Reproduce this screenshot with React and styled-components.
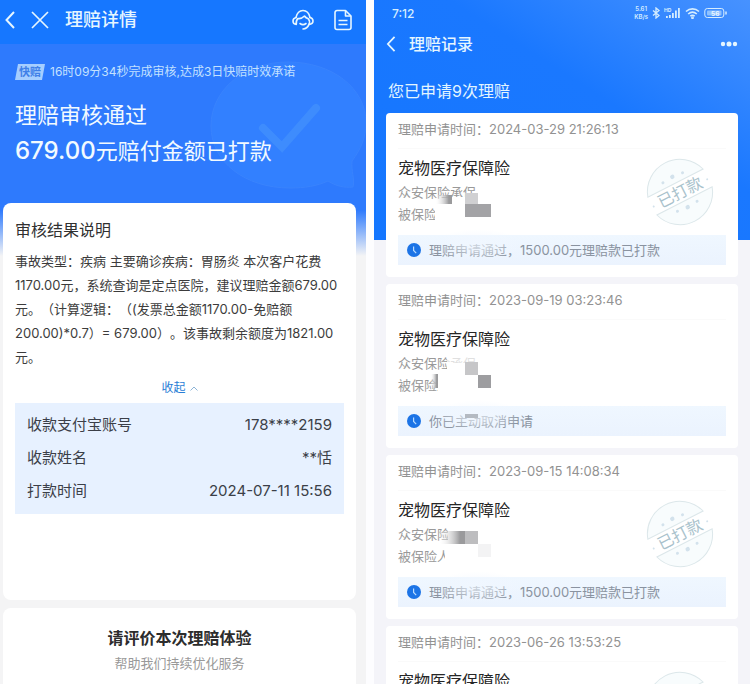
import React, { useState } from "react";
import styled, { createGlobalStyle } from "styled-components";

const GlobalStyle = createGlobalStyle`
    * {
        box-sizing: border-box;
    }
    body {
        margin: 0;
        background: #fdfdff;
        font-family: Inter, "Noto Sans CJK SC", sans-serif;
        text-spacing-trim: space-all;
    }
    h1, h2, h3, p, dl, dd, dt, ul {
        margin: 0;
        padding: 0;
        font-weight: 400;
    }
    button {
        display: flex;
        align-items: center;
        padding: 0;
        border: 0;
        background: none;
        color: inherit;
        font-family: inherit;
        cursor: pointer;
    }
    svg {
        display: block;
    }
`;

const Page = styled.div`
    display: grid;
    grid-template-columns: 366fr 376fr;
    column-gap: 8px;
    height: 100vh;
    overflow: hidden;
`;

const Screen = styled.main`
    display: flex;
    flex-direction: column;
    min-width: 0;
    overflow: hidden;
`;

const DetailScreen = styled(Screen)`
    background: linear-gradient(#2e7afd 210px, #f4f4f5 256px);
`;

const RecordScreen = styled(Screen)`
    background:
        linear-gradient(to bottom left, #4792ff 0%, #1a78ff 40%, #1476ff 100%) top / 100% 240px no-repeat,
        #f4f4f9;
`;

const NavBar = styled.header`
    flex: none;
    display: flex;
    align-items: center;
    height: ${(props) => props.$height}px;
    padding: ${(props) => props.$padding};
    gap: ${(props) => props.$gap}px;
    background: ${(props) => props.$bg || "none"};
    color: #e6f6ff;
`;

const NavTitle = styled.h1`
    flex: 1;
    font-size: ${(props) => props.$size}px;
    line-height: 24px;
    font-weight: 500;
`;

const NavActions = styled.div`
    display: flex;
    align-items: center;
    gap: 20px;
`;

const Hero = styled.section`
    flex: none;
    position: relative;
    padding: 17px 0 34px 15px;
    color: #f2faff;
`;

const Bubble = styled.svg`
    position: absolute;
    right: 0;
    top: 14px;
`;

const SpeedLine = styled.p`
    position: relative;
    display: flex;
    align-items: center;
    gap: 5px;
    margin-bottom: 14px;
    font-size: 12px;
    line-height: 22px;
    color: #c3e1ff;
`;

const SpeedTag = styled.span`
    padding: 0 4px;
    background: #a6ceff;
    clip-path: polygon(3px 0, 100% 0, calc(100% - 3px) 100%, 0 100%);
    color: #3f80e8;
    font-size: 11px;
    line-height: 16px;
    font-weight: 700;
`;

const HeroText = styled.h2`
    position: relative;
    font-size: 22px;
    line-height: 36px;
`;

const Amount = styled.strong`
    font-size: 24px;
    font-weight: 500;
`;

const Card = styled.section`
    flex: ${(props) => (props.$fill ? "1 0 auto" : "none")};
    margin: 0 10px 8px 3px;
    padding: ${(props) => props.$padding};
    border-radius: ${(props) => (props.$fill ? "8px 8px 0 0" : "8px")};
    ${(props) => props.$fill && "margin-bottom: 0;"}
    background: #fff;
`;

const CardTitle = styled.h3`
    margin-bottom: 7px;
    font-size: 16px;
    line-height: 24px;
    color: #303030;
`;

const Explain = styled.p`
    min-height: 120px;
    font-size: 13px;
    line-height: 24px;
    white-space: pre-line;
    color: #3c3c3c;
`;

const Toggle = styled.button`
    gap: 4px;
    margin: 7px auto 3px;
    font-size: 12px;
    line-height: 24px;
    color: #2a7ed6;
`;

const PayList = styled.dl`
    padding: 5px 12px 7px;
    background: #e7f1ff;
    font-size: 15px;
    line-height: 33px;
    color: #3b3f48;
`;

const PayRow = styled.div`
    display: flex;
    justify-content: space-between;
`;

const RateTitle = styled.h3`
    font-size: 16px;
    line-height: 24px;
    font-weight: 700;
    text-align: center;
    color: #2c2c2c;
`;

const RateHint = styled.p`
    font-size: 13px;
    line-height: 26px;
    text-align: center;
    color: #999;
`;

const StatusBar = styled.div`
    flex: none;
    display: flex;
    align-items: center;
    height: 26px;
    padding: 0 23px 0 18px;
    gap: 4px;
    color: #d5edff;
`;

const Clock = styled.time`
    flex: 1;
    font-size: 12px;
    font-weight: 500;
`;

const NetSpeed = styled.span`
    display: flex;
    flex-direction: column;
    font-size: 6px;
    line-height: 8px;
    font-weight: 600;
    text-align: center;
`;

const Summary = styled.h2`
    flex: none;
    padding: 17px 14px 10px;
    font-size: 16px;
    line-height: 24px;
    color: #e3f5ff;
`;

const Records = styled.ul`
    display: flex;
    flex-direction: column;
    gap: 7px;
    padding: 0 12px;
    list-style: none;
`;

const Record = styled.li`
    position: relative;
    flex: none;
    padding: 0 12px 12px;
    border-radius: 4px;
    background: #fff;
`;

const RecordTime = styled.p`
    padding-bottom: 3px;
    border-bottom: 1px solid #fafafa;
    font-size: 13px;
    line-height: 32px;
    color: #929292;
`;

const RecordName = styled.h3`
    padding: 7px 0 1px;
    font-size: 16px;
    line-height: 24px;
    color: #262626;
`;

const RecordLine = styled.p`
    font-size: 13px;
    line-height: 22px;
    color: #999;
`;

const Notice = styled.p`
    display: flex;
    align-items: center;
    gap: 8px;
    margin-top: 10px;
    padding: 0 9px;
    background: linear-gradient(#eff7ff, #ebf3fe);
    font-size: 13px;
    line-height: 30px;
    color: #8a93a0;
`;

const Overlay = styled.svg`
    position: absolute;
    left: 0;
    top: 0;
    pointer-events: none;
`;

const StampMark = styled.svg`
    position: absolute;
    right: 20px;
    top: 41px;
`;

const BackIcon = ({ width = 10, height = 18 }) => (
    <svg width={width} height={height} viewBox="0 0 10 18" fill="none" stroke="currentColor" strokeWidth="2">
        <path d="M9 1 1.500 9 9 17" />
    </svg>
);

const CloseIcon = () => (
    <svg width="18" height="18" viewBox="0 0 18 18" fill="none" stroke="currentColor" strokeWidth="1.700">
        <path d="M1 1l16 16M17 1 1 17" />
    </svg>
);

const ServiceIcon = () => (
    <svg width="22" height="22" viewBox="0 0 22 22" fill="none" stroke="currentColor" strokeWidth="1.600" strokeLinecap="round" strokeLinejoin="round">
        <path d="M4 8.500C5 4 7.800 1.500 11 1.500S17 4 18 8.500" />
        <path d="M4 8.500C2.200 9 1 10.200 1 12s1.300 3.300 3.300 3.400C4 13 4.300 10.800 6 9.500c2 .3 4.500-.5 6.500-2.500 1 1.700 3 2.500 4 3 1.200 1.500 1.300 3.500.5 5.400" />
        <path d="M18 8.500c1.900.5 3 1.800 3 3.500s-1.200 3.200-4 3.400c-1 2.500-2.900 4.600-6 4.600" />
        <path d="M8 14.500c1.800 1.300 4.200 1.300 6 0" />
    </svg>
);

const FileIcon = () => (
    <svg width="18" height="22" viewBox="0 0 18 22" fill="none" stroke="currentColor" strokeWidth="1.600" strokeLinejoin="round">
        <path d="M3 1.500h8.500l5.500 5.500v11.500a2 2 0 0 1-2 2H3a2 2 0 0 1-2-2v-15a2 2 0 0 1 2-2z" />
        <path d="M11.500 1.500v5.500H17M4.500 11.500h9M4.500 15.500h9" />
    </svg>
);

const ClockIcon = () => (
    <svg width="14" height="14" viewBox="0 0 14 14">
        <circle cx="7" cy="7" r="7" fill="#1c74e6" />
        <path d="M6.600 3.500v4l2.600 2.600" fill="none" stroke="#b9dcff" strokeWidth="1.200" />
    </svg>
);

const StatusIcons = () => (
    <>
        <svg width="8" height="12" viewBox="0 0 8 12" fill="none" stroke="currentColor" strokeWidth="1.300">
            <path d="M1 3.500l6 5L4 11V1l3 2.500-6 5" />
        </svg>
        <svg width="17" height="12" viewBox="0 0 17 12" fill="currentColor">
            <text x="0" y="4.500" fontSize="5" fontWeight="700">HD</text>
            <path d="M2 9h1.800v2H2zM5 8h1.800v3H5zM8 6h1.800v5H8zM11 3.500h1.800V11H11zM14 1h1.800v10H14z" />
        </svg>
        <svg width="15" height="12" viewBox="0 0 15 12" fill="none" stroke="currentColor" strokeWidth="1.600">
            <path d="M1 4.500C4.800 1 10.200 1 14 4.500M3.200 7c2.600-2.300 6-2.300 8.600 0M5.300 9.200c1.400-1.100 3-1.100 4.400 0" />
            <circle cx="7.500" cy="10.800" r="0.600" />
        </svg>
        <svg width="23" height="12" viewBox="0 0 23 12" fill="none" stroke="currentColor">
            <rect x="0.800" y="1.500" width="19" height="9" rx="2.500" />
            <rect x="3" y="3.500" width="14.500" height="5" rx="1" fill="#8fc2ff" stroke="none" />
            <text x="7" y="8.500" fontSize="6.500" fontWeight="700" fill="#e8f6ff" stroke="none">56</text>
            <path d="M22 4.500v3" strokeWidth="1.500" />
        </svg>
    </>
);

const Stamp = () => (
    <StampMark width="76" height="76" viewBox="-38 -38 76 76">
        <g transform="rotate(-27)">
            <g fill="#f8fcfd" stroke="#dce7ea" strokeWidth="1">
                <path d="M-31-10a32.500 32.500 0 0 1 62 0z" />
                <path d="M-31 10a32.500 32.500 0 0 0 62 0z" />
            </g>
            <g fill="#d3e2ec">
                <circle cx="-11" cy="-16" r="1.500" />
                <circle cx="0" cy="-17" r="2.200" />
                <circle cx="11" cy="-16" r="1.500" />
                <circle cx="-11" cy="16" r="1.500" />
                <circle cx="0" cy="17" r="2.200" />
                <circle cx="11" cy="16" r="1.500" />
                <circle cx="-30" cy="1" r="1" />
                <circle cx="30" cy="1" r="1" />
            </g>
            <text x="0" y="6" textAnchor="middle" fontSize="16" fill="#a9c2cc">已打款</text>
        </g>
    </StampMark>
);

// Blocks that hide personal data, in card coordinates: [x, y, width, height, fill]
const masks = {
    a: [
        [49, 92, 44, 22, "#fff"],
        [66, 84, 13, 10, "#fff"],
        [50, 82, 16, 9, "url(#fade)"],
        [79, 80, 13, 11, "#d0d0d2"],
        [79, 91, 26, 13, "#a3a3a6"],
    ],
    b: [
        [61, 79, 31, 13, "#fff"],
        [52, 91, 40, 19, "#fff"],
        [61, 72, 31, 7, "url(#veil)"],
        [45, 90, 7, 14, "url(#fade)"],
        [79, 78, 13, 13, "#c6c6c8"],
        [92, 91, 13, 13, "#9d9da0"],
        [79, 130, 13, 4, "#b4bac2"],
    ],
    c: [
        [62, 72, 34, 17, "#fff"],
        [59, 91, 38, 22, "#fff"],
        [54, 76, 25, 13, "url(#fade)"],
        [79, 76, 13, 13, "#bdbdbf"],
        [92, 89, 13, 13, "#f3f3f4"],
    ],
};

const Mosaic = ({ kind }) => (
    <Overlay width="160" height="164">
        <defs>
            <linearGradient id="fade">
                <stop offset="0" stopColor="#fff" stopOpacity="0.200" />
                <stop offset="0.800" stopColor="#9a9a9c" />
            </linearGradient>
            <linearGradient id="veil">
                <stop offset="0" stopColor="#fff" stopOpacity="0.700" />
                <stop offset="1" stopColor="#fff" stopOpacity="0.700" />
            </linearGradient>
            <radialGradient id="haze">
                <stop offset="0.300" stopColor="#f1f7ff" stopOpacity="0.600" />
                <stop offset="1" stopColor="#f1f7ff" stopOpacity="0" />
            </radialGradient>
        </defs>
        <ellipse cx="92" cy="132" rx="44" ry="16" fill="url(#haze)" />
        {(masks[kind] || []).map(([x, y, w, h, fill]) => (
            <rect key={`${x}-${y}`} x={x} y={y} width={w} height={h} fill={fill} />
        ))}
    </Overlay>
);

const payInfo = [
    ["收款支付宝账号", "178****2159"],
    ["收款姓名", "**恬"],
    ["打款时间", "2024-07-11 15:56"],
];

const records = [
    { time: "2024-03-29 21:26:13", notice: "理赔申请通过，1500.00元理赔款已打款", paid: true, mask: "a" },
    { time: "2023-09-19 03:23:46", notice: "你已主动取消申请", paid: false, mask: "b" },
    { time: "2023-09-15 14:08:34", notice: "理赔申请通过，1500.00元理赔款已打款", paid: true, mask: "c" },
    { time: "2023-06-26 13:53:25", notice: "", paid: true },
];

const explainText = `事故类型：疾病 主要确诊疾病：胃肠炎 本次客户花费
1170.00元，系统查询是定点医院，建议理赔金额679.00
元。（计算逻辑：（(发票总金额1170.00-免赔额
200.00)*0.7）= 679.00）。该事故剩余额度为1821.00
元。`;

const ClaimDetail = () => {
    const [open, setOpen] = useState(true);
    return (
        <DetailScreen>
            <NavBar $height={44} $padding="0 14px 4px 5px" $gap={16} $bg="#1677ff">
                <button aria-label="返回"><BackIcon /></button>
                <button aria-label="关闭"><CloseIcon /></button>
                <NavTitle $size={18}>理赔详情</NavTitle>
                <NavActions>
                    <button aria-label="客服"><ServiceIcon /></button>
                    <button aria-label="单据"><FileIcon /></button>
                </NavActions>
            </NavBar>
            <Hero>
                <Bubble width="156" height="132" viewBox="0 0 156 132">
                    <path
                        d="M78 4C34 4 1 32 1 68s34 62 79 62c15 0 27-2 38-7 8 5 16 7 25 6 2-8-2-16-1-26 9-12 14-24 14-38 0-35-34-61-78-61z"
                        fill="#3280ff"
                        stroke="#3983fd"
                    />
                    <path d="M53 70l19 19 34-39" fill="none" stroke="#3e8cfd" strokeWidth="8" strokeLinecap="round" />
                </Bubble>
                <SpeedLine>
                    <SpeedTag>快赔</SpeedTag>
                    16时09分34秒完成审核,达成3日快赔时效承诺
                </SpeedLine>
                <HeroText>理赔审核通过</HeroText>
                <HeroText><Amount>679.00</Amount>元赔付金额已打款</HeroText>
            </Hero>
            <Card $padding="15px 12px 86px">
                <CardTitle>审核结果说明</CardTitle>
                {open && <Explain>{explainText}</Explain>}
                <Toggle onClick={() => setOpen(!open)}>
                    {open ? "收起" : "展开"}
                    <svg width="8" height="5" viewBox="0 0 8 5" fill="none" stroke="#8db4d6">
                        <path d={open ? "M0.500 4.500 4 1l3.500 3.500" : "M0.500 0.500 4 4l3.500-3.500"} />
                    </svg>
                </Toggle>
                <PayList>
                    {payInfo.map(([label, value]) => (
                        <PayRow key={label}>
                            <dt>{label}</dt>
                            <dd>{value}</dd>
                        </PayRow>
                    ))}
                </PayList>
            </Card>
            <Card $fill $padding="18px 12px">
                <RateTitle>请评价本次理赔体验</RateTitle>
                <RateHint>帮助我们持续优化服务</RateHint>
            </Card>
        </DetailScreen>
    );
};

const ClaimRecords = () => (
    <RecordScreen>
        <StatusBar>
            <Clock>7:12</Clock>
            <NetSpeed><span>5.61</span><span>KB/s</span></NetSpeed>
            <StatusIcons />
        </StatusBar>
        <NavBar $height={36} $padding="0 12px" $gap={13}>
            <button aria-label="返回"><BackIcon height={16} /></button>
            <NavTitle $size={16}>理赔记录</NavTitle>
            <button aria-label="更多">
                <svg width="18" height="6" viewBox="0 0 18 6" fill="currentColor">
                    <circle cx="3" cy="3" r="2.200" />
                    <circle cx="9" cy="3" r="2.500" />
                    <circle cx="15" cy="3" r="2.200" />
                </svg>
            </button>
        </NavBar>
        <Summary>您已申请9次理赔</Summary>
        <Records>
            {records.map((item) => (
                <Record key={item.time}>
                    <RecordTime>理赔申请时间：{item.time}</RecordTime>
                    <RecordName>宠物医疗保障险</RecordName>
                    {item.notice && (
                        <>
                            <RecordLine>众安保险承保</RecordLine>
                            <RecordLine>被保险人</RecordLine>
                            <Notice><ClockIcon />{item.notice}</Notice>
                            <Mosaic kind={item.mask} />
                        </>
                    )}
                    {item.paid && <Stamp />}
                </Record>
            ))}
        </Records>
    </RecordScreen>
);

const App = () => (
    <Page>
        <GlobalStyle />
        <ClaimDetail />
        <ClaimRecords />
    </Page>
);

export default App;
